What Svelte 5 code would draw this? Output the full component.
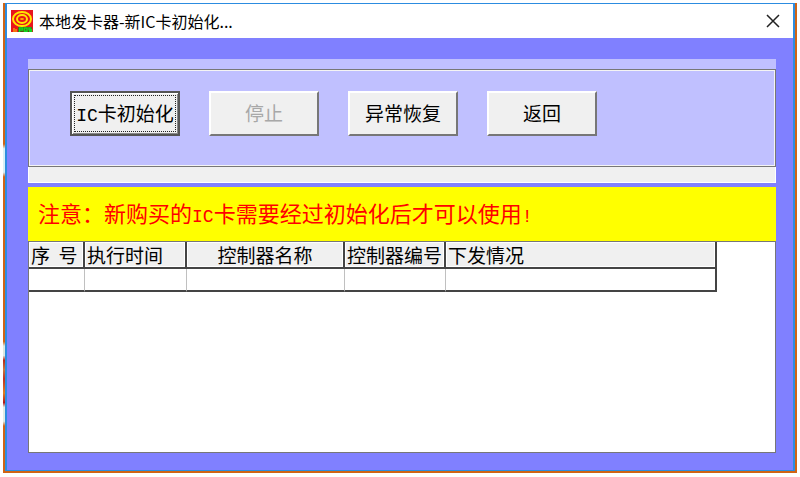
<script>
  const actions = [
    { latin: 'IC', label: '卡初始化', focused: true },
    { label: '停止', disabled: true },
    { label: '异常恢复' },
    { label: '返回' },
  ];

  const columns = [
    { label: '序  号', width: 56 },
    { label: '执行时间', width: 102 },
    { label: '控制器名称', width: 158, center: true },
    { label: '控制器编号', width: 101 },
    { label: '下发情况', width: 271 },
  ];
</script>

<div class="desktop">
  <main class="window">
    <header class="titlebar">
      <svg class="app-icon" viewBox="0 0 22 22" aria-hidden="true">
        <rect width="22" height="22" fill="#e8141c" />
        <ellipse cx="11" cy="9" rx="9" ry="7" fill="none" stroke="#ffe600" stroke-width="2" />
        <ellipse cx="11" cy="9" rx="5" ry="4" fill="none" stroke="#ffe600" stroke-width="2" />
        <ellipse cx="11" cy="9" rx="2" ry="1" fill="#ffb000" />
        <path d="M3 18v4M5 19v3" fill="none" stroke="#ffd000" stroke-width="1" />
        <path d="M7 17h14v5H7z" fill="#5a4a10" />
        <path
          d="M8.5 22v-4h3v2h-3M13.5 18H16v3.3h-2.5zM20.5 18H18v1.7h2.5v1.6H18"
          fill="none"
          stroke="#10d820"
          stroke-width="1.5"
        />
      </svg>
      <h1>本地发卡器-新IC卡初始化...</h1>
      <button class="close" type="button" aria-label="关闭">
        <svg viewBox="0 0 14 14" aria-hidden="true">
          <path d="M1 1l12 12M13 1L1 13" />
        </svg>
      </button>
    </header>

    <div class="client">
      <div class="strip"></div>
      <div class="toolbar">
        {#each actions as action}
          <button
            class="action"
            class:focused={action.focused}
            type="button"
            disabled={action.disabled}
          >
            <span class="face">{#if action.latin}<span class="latin">{action.latin}</span>{/if}{action.label}</span>
          </button>
        {/each}
      </div>
      <div class="progress"></div>

      <p class="notice">注意：新购买的<span class="latin">IC</span>卡需要经过初始化后才可以使用<span class="latin">!</span></p>

      <div class="list">
        <table>
          <colgroup>
            {#each columns as column}
              <col style:width="{column.width}px" />
            {/each}
          </colgroup>
          <thead>
            <tr>
              {#each columns as column}
                <th class:center={column.center}>{column.label}</th>
              {/each}
            </tr>
          </thead>
          <tbody>
            <tr>
              {#each columns as column}
                <td></td>
              {/each}
            </tr>
          </tbody>
        </table>
      </div>
    </div>
  </main>
</div>

<style>
  :global(body) {
    margin: 0;
    background: #fff;
  }

  .desktop {
    box-sizing: border-box;
    min-height: 100vh;
    display: flex;
    border: solid #fff;
    border-width: 3px 3px 4px;
    padding: 0 2px 2px;
    background:
      linear-gradient(
        to bottom,
        transparent 30%,
        #d8f0f4 31%,
        #d8f0f4 36%,
        transparent 37%,
        transparent 72%,
        #dce8e0 73%,
        #dce8e0 75%,
        #b82818 76%,
        #c87840 78%,
        #c03020 80%,
        #e08020 83%,
        #b01818 85%,
        #e0ece4 86%,
        #e0ece4 89%,
        transparent 90%
      ) left / 2px 100% no-repeat,
      #d06414;
    font-family: 'Noto Sans CJK SC', sans-serif;
  }

  .window {
    flex: 1;
    min-width: 0;
    display: flex;
    flex-direction: column;
    border: solid #2c8ce0;
    border-width: 1px 2px;
    background: #8080ff;
  }

  .titlebar {
    display: flex;
    align-items: center;
    gap: 6px;
    height: 34px;
    padding: 0 13px 0 4px;
    background: #fff;
  }

  .app-icon {
    width: 22px;
    height: 22px;
  }

  h1 {
    flex: 1;
    margin: 0;
    font-size: 16px;
    line-height: 24px;
    font-weight: 400;
    color: #000;
  }

  .close {
    display: grid;
    place-items: center;
    padding: 0;
    border: 0;
    background: none;
  }

  .close svg {
    width: 14px;
    height: 14px;
    fill: none;
    stroke: #222;
    stroke-width: 1.5;
  }

  .client {
    flex: 1;
    display: flex;
    flex-direction: column;
    padding: 21px 17px 17px 21px;
  }

  .strip {
    height: 10px;
    background: #c0c0ff;
  }

  .toolbar {
    display: flex;
    gap: 29px;
    padding: 21px 41px 30px;
    border: 1px solid #777;
    box-shadow: inset 0 0 0 1px #f4f4f4;
    background: #c0c0ff;
  }

  .action {
    box-sizing: border-box;
    width: 110px;
    height: 45px;
    padding: 2px;
    border: 2px solid;
    border-color: #fff #777 #777 #fff;
    background: #f0f0f0;
    color: #000;
    font: 19px/28px 'Noto Sans CJK SC', sans-serif;
    white-space: nowrap;
  }

  .action:disabled {
    color: #a8a8a8;
  }

  .action.focused {
    border-color: #555;
    box-shadow: inset 1px 1px #fff, inset -1px -1px #888;
  }

  .face {
    box-sizing: border-box;
    display: grid;
    grid-auto-flow: column;
    place-content: center;
    align-items: baseline;
    height: 100%;
    padding-bottom: 2px;
  }

  .focused .face {
    border: 1px dotted #222;
  }

  .latin {
    font-family: 'Liberation Mono', monospace;
    font-size: 18px;
    line-height: 1;
  }

  .progress {
    height: 15px;
    border: solid #fff;
    border-width: 0 1px 1px;
    background: #f0f0f0;
  }

  .notice {
    margin: 4px 0 0;
    padding: 8px 10px 12px;
    background: #ff0;
    color: #f00;
    font-size: 22px;
    line-height: 34px;
  }

  .list {
    flex: 1;
    border: 1px solid #777;
    background: #fff;
  }

  table {
    table-layout: fixed;
    width: 688px;
    border-collapse: separate;
    border-spacing: 0;
  }

  th,
  td {
    box-sizing: border-box;
    padding: 0 2px;
    border-bottom: 2px solid #444;
    text-align: left;
    white-space: pre;
  }

  th {
    height: 27px;
    border-right: 2px solid #444;
    box-shadow: inset 1px 1px #fff, inset -1px -1px #fff;
    background: #f0f0f0;
    font-size: 19px;
    line-height: 25px;
    font-weight: 400;
  }

  th.center {
    text-align: center;
  }

  td {
    height: 23px;
    border-right: 1px solid #c0c0c0;
  }

  td:last-child {
    border-right: 2px solid #444;
  }
</style>
